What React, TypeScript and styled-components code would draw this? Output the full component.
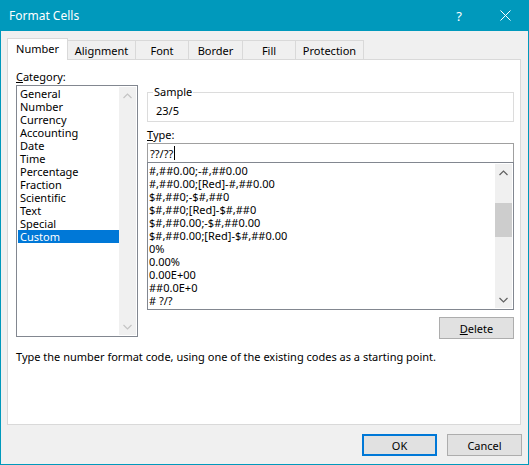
import React from "react";
import styled, { createGlobalStyle } from "styled-components";

const GlobalStyle = createGlobalStyle`
  html, body {
    margin: 0;
    padding: 0;
    background: #ffffff;
  }
  body {
    font-family: "Segoe UI", "Noto Sans", sans-serif;
    font-size: 11px;
    color: #000;
  }
`;

const ACCENT = "#0099bc";

const Window = styled.div`
  width: 529px;
  height: 465px;
  box-sizing: border-box;
  border: 1px solid ${ACCENT};
  border-top: none;
  background: #f0f0f0;
  display: flex;
  flex-direction: column;
`;

const TitleBar = styled.div`
  height: 31px;
  background: ${ACCENT};
  color: #fff;
  display: flex;
  align-items: center;
  padding-left: 8px;
  font-size: 12px;
`;

const Title = styled.div`
  flex: 1;
`;

const CaptionButton = styled.div`
  width: 46px;
  height: 31px;
  display: flex;
  align-items: center;
  justify-content: center;
  font-size: 13px;
`;

const Body = styled.div`
  flex: 1;
  display: flex;
  flex-direction: column;
  padding: 7px 7px 0 6px;
`;

const TabRow = styled.div`
  display: flex;
  align-items: flex-end;
  height: 21px;
`;

const Tab = styled.div<{ $active?: boolean; $w: number }>`
  box-sizing: border-box;
  width: ${(p) => p.$w}px;
  height: ${(p) => (p.$active ? 22 : 19)}px;
  margin-bottom: ${(p) => (p.$active ? -1 : 0)}px;
  margin-left: -1px;
  &:first-child {
    margin-left: 0;
  }
  border: 1px solid #d9d9d9;
  border-bottom: none;
  background: ${(p) => (p.$active ? "#fff" : "#f0f0f0")};
  position: relative;
  z-index: ${(p) => (p.$active ? 1 : 0)};
  display: flex;
  align-items: center;
  justify-content: center;
  padding-bottom: ${(p) => (p.$active ? 2 : 0)}px;
`;

const Panel = styled.div`
  height: 366px;
  box-sizing: border-box;
  border: 1px solid #d9d9d9;
  background: #fff;
  padding: 9px 6px 0 8px;
  display: flex;
  flex-direction: column;
`;

const Top = styled.div`
  display: flex;
  gap: 9px;
`;

const LeftCol = styled.div`
  width: 122px;
  display: flex;
  flex-direction: column;
`;

const RightCol = styled.div`
  width: 367px;
  display: flex;
  flex-direction: column;
  padding-top: 15px;
`;

const Label = styled.div<{ $mt?: number }>`
  line-height: 16px;
  margin-top: ${(p) => p.$mt || 0}px;
`;

const ListBox = styled.div<{ $h: number }>`
  box-sizing: border-box;
  height: ${(p) => p.$h}px;
  border: 1px solid #828790;
  padding: 1px;
  display: flex;
  background: #fff;
`;

const Items = styled.div`
  flex: 1;
  display: flex;
  flex-direction: column;
  overflow: hidden;
`;

const Item = styled.div<{ $selected?: boolean; $pad: number }>`
  height: 13px;
  line-height: 13px;
  white-space: nowrap;
  padding-left: ${(p) => p.$pad}px;
  background: ${(p) => (p.$selected ? "#0078d7" : "transparent")};
  color: ${(p) => (p.$selected ? "#fff" : "#000")};
`;

const Track = styled.div`
  width: 17px;
  background: #f0f0f0;
  display: flex;
  flex-direction: column;
`;

const ArrowBox = styled.div`
  height: 17px;
  display: flex;
  align-items: center;
  justify-content: center;
`;

const ThumbArea = styled.div`
  flex: 1;
`;

const Thumb = styled.div`
  background: #cdcdcd;
  width: 100%;
`;

const Fieldset = styled.fieldset`
  margin: 0;
  padding: 3px 6px 2px 8px;
  border: 1px solid #dcdcdc;
  min-width: 0;
`;

const Legend = styled.legend`
  padding: 0 1px;
  margin-left: -3px;
  line-height: 16px;
`;

const SampleValue = styled.div`
  line-height: 16px;
`;

const Input = styled.div`
  box-sizing: border-box;
  height: 20px;
  border: 1px solid #a0a0a0;
  padding-left: 2px;
  display: flex;
  align-items: center;
  background: #fff;
`;

const Caret = styled.span`
  display: inline-block;
  width: 1px;
  height: 14px;
  background: #000;
  margin-left: 1px;
`;

const Button = styled.div<{ $default?: boolean }>`
  box-sizing: border-box;
  width: 75px;
  height: 22px;
  border: ${(p) => (p.$default ? "2px solid #0078d7" : "1px solid #adadad")};
  background: #e1e1e1;
  display: flex;
  align-items: center;
  justify-content: center;
`;

const RightAligned = styled.div`
  display: flex;
  justify-content: flex-end;
  margin-top: 7px;
`;

const Hint = styled.div`
  margin-top: 10px;
  line-height: 16px;
`;

const Footer = styled.div`
  display: flex;
  justify-content: flex-end;
  gap: 10px;
  margin-top: 9px;
  margin-right: -1px;
`;

const TABS: Array<{ label: string; w: number }> = [
  { label: "Number", w: 61 },
  { label: "Alignment", w: 69 },
  { label: "Font", w: 54 },
  { label: "Border", w: 55 },
  { label: "Fill", w: 54 },
  { label: "Protection", w: 69 },
];

const CATEGORIES = [
  "General",
  "Number",
  "Currency",
  "Accounting",
  "Date",
  "Time",
  "Percentage",
  "Fraction",
  "Scientific",
  "Text",
  "Special",
  "Custom",
];

const FORMATS = [
  "#,##0.00;-#,##0.00",
  "#,##0.00;[Red]-#,##0.00",
  "$#,##0;-$#,##0",
  "$#,##0;[Red]-$#,##0",
  "$#,##0.00;-$#,##0.00",
  "$#,##0.00;[Red]-$#,##0.00",
  "0%",
  "0.00%",
  "0.00E+00",
  "##0.0E+0",
  "# ?/?",
];

const Chevron = ({ up, color }: { up?: boolean; color: string }) => (
  <svg width="9" height="6" viewBox="0 0 9 6">
    <polyline
      points={up ? "0.5,5 4.5,1 8.5,5" : "0.5,1 4.5,5 8.5,1"}
      fill="none"
      stroke={color}
      strokeWidth="1.2"
    />
  </svg>
);

const ScrollBar = ({
  disabled,
  thumbTop,
  thumbHeight,
}: {
  disabled?: boolean;
  thumbTop?: number;
  thumbHeight?: number;
}) => {
  const color = disabled ? "#c4c4c4" : "#606060";
  return (
    <Track>
      <ArrowBox>
        <Chevron up color={color} />
      </ArrowBox>
      <ThumbArea>
        {thumbHeight ? (
          <Thumb style={{ marginTop: thumbTop, height: thumbHeight }} />
        ) : null}
      </ThumbArea>
      <ArrowBox>
        <Chevron color={color} />
      </ArrowBox>
    </Track>
  );
};

const CloseIcon = () => (
  <svg width="11" height="11" viewBox="0 0 11 11">
    <path d="M0.5 0.5 L10.5 10.5 M10.5 0.5 L0.5 10.5" stroke="#fff" strokeWidth="1" />
  </svg>
);

const App = () => {
  return (
    <>
      <GlobalStyle />
      <Window>
        <TitleBar>
          <Title>Format Cells</Title>
          <CaptionButton>?</CaptionButton>
          <CaptionButton>
            <CloseIcon />
          </CaptionButton>
        </TitleBar>
        <Body>
          <TabRow>
            {TABS.map((t, i) => (
              <Tab key={t.label} $w={t.w} $active={i === 0}>
                {t.label}
              </Tab>
            ))}
          </TabRow>
          <Panel>
            <Top>
              <LeftCol>
                <Label>
                  <u>C</u>ategory:
                </Label>
                <ListBox $h={252}>
                  <Items>
                    {CATEGORIES.map((c) => (
                      <Item key={c} $pad={2} $selected={c === "Custom"}>
                        {c}
                      </Item>
                    ))}
                  </Items>
                  <ScrollBar disabled />
                </ListBox>
              </LeftCol>
              <RightCol>
                <Fieldset>
                  <Legend>Sample</Legend>
                  <SampleValue>23/5</SampleValue>
                </Fieldset>
                <Label $mt={5}>
                  <u>T</u>ype:
                </Label>
                <Input>
                  ??/??
                  <Caret />
                </Input>
                <ListBox $h={148} style={{ marginTop: -1 }}>
                  <Items>
                    {FORMATS.map((f) => (
                      <Item key={f} $pad={0}>
                        {f}
                      </Item>
                    ))}
                  </Items>
                  <ScrollBar thumbTop={22} thumbHeight={34} />
                </ListBox>
                <RightAligned>
                  <Button>
                    <span>
                      <u>D</u>elete
                    </span>
                  </Button>
                </RightAligned>
              </RightCol>
            </Top>
            <Hint>
              Type the number format code, using one of the existing codes as a
              starting point.
            </Hint>
          </Panel>
          <Footer>
            <Button $default>OK</Button>
            <Button>Cancel</Button>
          </Footer>
        </Body>
      </Window>
    </>
  );
};

export default App;
